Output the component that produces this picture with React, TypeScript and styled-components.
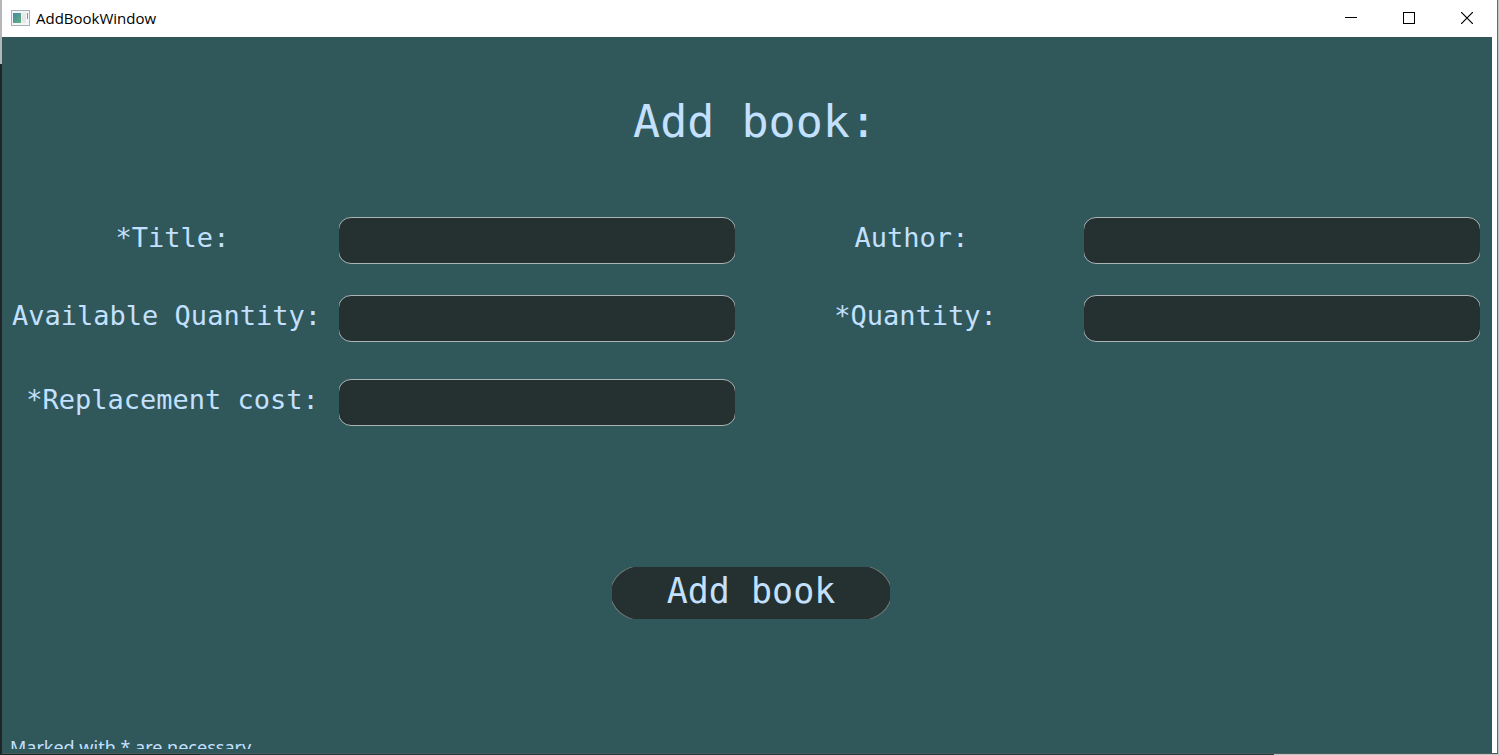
import React from "react";
import styled, { createGlobalStyle } from "styled-components";

const Global = createGlobalStyle`
  * { box-sizing: border-box; }
  html, body { margin: 0; background: #c4c4c4; }
  body { font-family: "Open Sans", "Noto Sans", sans-serif; overflow: hidden; }
`;

const mono = `"DejaVu Sans Mono", "Liberation Mono", monospace`;
const ink = "#c3e0ff";
const teal = "#30575a";
const dark = "#253030";

const Desktop = styled.div`
  display: grid;
  grid-template-columns: 2px minmax(0, 1fr) 1px;
  grid-template-rows: 1fr 1px;
  min-height: 100vh;
`;

const LeftEdge = styled.div`
  background: linear-gradient(#b4b6b8 0 64px, #1f2628 64px);
`;

const RightEdge = styled.div`
  background: #c4c4c4;
`;

const BottomEdge = styled.div`
  grid-column: 1 / -1;
  background: linear-gradient(90deg, #1f2628 0 200px, #253a3c 200px 85%, #c4c4c4 85%);
`;

const Window = styled.div`
  display: flex;
  flex-direction: column;
  background: #fff;
  border-right: 1px solid #6a6a6a;
  border-bottom: 1px solid #4a5a5c;
`;

const TitleBar = styled.header`
  display: flex;
  align-items: center;
  height: 37px;
  padding: 0 1px 2px 9px;
  background: #fff;
`;

const TitleText = styled.span`
  flex: 1;
  margin-left: 6px;
  font-size: 15px;
  line-height: 20px;
  color: #000;
`;

const WindowButton = styled.button`
  display: flex;
  align-items: center;
  justify-content: center;
  width: 58px;
  height: 34px;
  padding: 0;
  border: 0;
  background: transparent;
`;

const Content = styled.main`
  flex: 1;
  display: flex;
  flex-direction: column;
  margin-right: 5px;
  padding-top: 53px;
  background: ${teal};
  color: ${ink};
`;

const Heading = styled.h1`
  margin: 0 0 63px;
  font: 400 45px/64px ${mono};
  text-align: center;
  padding-left: 16px;
`;

const Form = styled.form`
  flex: 1;
  display: flex;
  flex-direction: column;
`;

const Fields = styled.div`
  display: grid;
  grid-template-columns: 1fr 1fr;
  row-gap: 31px;
`;

const Field = styled.div<{ $spaced?: boolean }>`
  display: grid;
  grid-template-columns: 337px minmax(0, 1fr);
  padding-right: 12px;
  margin-top: ${(p) => (p.$spaced ? "6px" : "0")};
`;

const Label = styled.label<{ $shift?: "left" | "right" }>`
  padding-left: ${(p) => (p.$shift === "right" ? "4px" : "0")};
  padding-right: ${(p) => (p.$shift === "left" ? "8px" : "0")};
  font: 400 27px/42px ${mono};
  text-align: center;
  white-space: nowrap;
`;

const InputClip = styled.div`
  display: flex;
  height: 47px;
  overflow: hidden;
`;

const Input = styled.input`
  flex: 1;
  min-width: 0;
  margin: 0 -1px;
  padding: 0 12px;
  border: 1px solid #abb3b5;
  border-radius: 13px;
  outline: 0;
  background: ${dark};
  color: ${ink};
  font: 400 27px/40px ${mono};
`;

const ButtonClip = styled.div`
  align-self: center;
  width: 278px;
  height: 52px;
  margin-top: 141px;
  margin-left: 8px;
  overflow: hidden;
`;

const Submit = styled.button`
  width: 282px;
  height: 56px;
  margin: -2px;
  padding: 0 0 4px;
  border: 1px solid #707878;
  border-radius: 32px / 28px;
  background: ${dark};
  color: ${ink};
  font: 400 35px/48px ${mono};
`;

const Note = styled.p`
  height: 14px;
  margin: auto 0 4px;
  padding-left: 8px;
  overflow: hidden;
  font-family: "Noto Sans", "Open Sans", sans-serif;
  font-size: 18px;
  line-height: 24px;
`;

const AppIcon = () => (
  <svg width="19" height="16" viewBox="0 0 19 16" aria-hidden="true">
    <defs>
      <linearGradient id="pane" x1="0" y1="0" x2="1" y2="1">
        <stop offset="0" stopColor="#4a86a8" />
        <stop offset="1" stopColor="#5cb27c" />
      </linearGradient>
    </defs>
    <rect x="0.5" y="0.5" width="18" height="15" fill="#f4f5f6" stroke="#a9afb6" />
    <rect x="2" y="3" width="8" height="10" fill="url(#pane)" />
    <rect x="11" y="3" width="4" height="10" fill="#e6e8ea" />
    <rect x="16" y="3" width="1" height="6" fill="#62ad8c" />
  </svg>
);

const fields: { id: string; text: string; shift?: "left" | "right"; spaced?: boolean }[] = [
  { id: "title", text: "*Title:", shift: "right" },
  { id: "author", text: "Author:", shift: "left" },
  { id: "available", text: "Available Quantity:", shift: "left" },
  { id: "quantity", text: "*Quantity:" },
  { id: "cost", text: "*Replacement cost:", shift: "right", spaced: true },
];

export default function App() {
  return (
    <>
      <Global />
      <Desktop>
        <LeftEdge />
        <Window>
          <TitleBar>
            <AppIcon />
            <TitleText>AddBookWindow</TitleText>
            <WindowButton aria-label="Minimize">
              <svg width="12" height="12" viewBox="0 0 12 12"><path d="M0 5.5H12" stroke="#000" /></svg>
            </WindowButton>
            <WindowButton aria-label="Maximize">
              <svg width="12" height="12" viewBox="0 0 12 12"><rect x="0.5" y="0.5" width="11" height="11" fill="none" stroke="#000" /></svg>
            </WindowButton>
            <WindowButton aria-label="Close">
              <svg width="12" height="12" viewBox="0 0 12 12"><path d="M0 0L12 12M12 0L0 12" stroke="#000" strokeWidth="1.2" /></svg>
            </WindowButton>
          </TitleBar>
          <Content>
            <Heading>Add book:</Heading>
            <Form onSubmit={(e) => e.preventDefault()}>
              <Fields>
                {fields.map((f) => (
                  <Field key={f.id} $spaced={f.spaced}>
                    <Label htmlFor={f.id} $shift={f.shift}>{f.text}</Label>
                    <InputClip>
                      <Input id={f.id} type="text" />
                    </InputClip>
                  </Field>
                ))}
              </Fields>
              <ButtonClip>
                <Submit type="submit">Add book</Submit>
              </ButtonClip>
              <Note>Marked with * are necessary</Note>
            </Form>
          </Content>
        </Window>
        <RightEdge />
        <BottomEdge />
      </Desktop>
    </>
  );
}
